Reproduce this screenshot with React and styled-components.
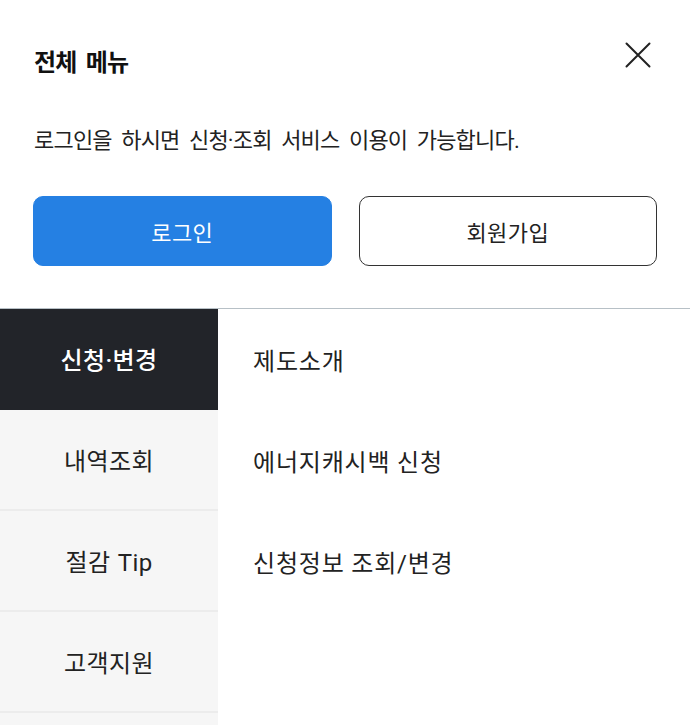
import styled, { createGlobalStyle } from "styled-components";

const GlobalStyle = createGlobalStyle`
  * {
    box-sizing: border-box;
  }
  body {
    margin: 0;
    background: #ffffff;
    font-family: "Roboto", "Noto Sans CJK KR", sans-serif;
    color: #222222;
  }
`;

const Panel = styled.div`
  width: 690px;
  height: 725px;
  overflow: hidden;
  background: #ffffff;
`;

const Header = styled.header`
  display: flex;
  align-items: flex-start;
  justify-content: space-between;
  padding: 42px 39px 0 34px;
  height: 84px;
`;

const Title = styled.h1`
  margin: 4px 0 0;
  font-size: 24px;
  line-height: 34px;
  font-weight: 700;
  color: #111111;
  letter-spacing: -0.8px;
  word-spacing: 4px;
`;

const CloseButton = styled.button`
  display: flex;
  padding: 0;
  border: none;
  background: none;
  cursor: pointer;
`;

const Notice = styled.p`
  margin: 42px 0 0 34px;
  font-size: 22px;
  line-height: 30px;
  color: #222222;
  letter-spacing: -0.8px;
  word-spacing: 4.8px;
`;

const ButtonRow = styled.div`
  display: grid;
  grid-template-columns: 1fr 1fr;
  gap: 27px;
  padding: 0 33px;
  margin-top: 40px;
`;

const AuthButton = styled.button`
  height: 70px;
  border-radius: 10px;
  font-family: inherit;
  font-size: 22px;
  letter-spacing: 0.4px;
  cursor: pointer;
  border: 1px solid ${(p) => (p.$primary ? "#2580e3" : "#333333")};
  background: ${(p) => (p.$primary ? "#2580e3" : "#ffffff")};
  color: ${(p) => (p.$primary ? "#ffffff" : "#222222")};
`;

const MenuArea = styled.div`
  display: flex;
  margin-top: 42px;
  border-top: 1px solid #b7c0c6;
`;

const Categories = styled.ul`
  list-style: none;
  margin: 0;
  padding: 0;
  width: 218px;
  background: #f6f6f6;
`;

const Category = styled.li`
  display: flex;
  align-items: center;
  justify-content: center;
  height: 101px;
  font-size: 24px;
  letter-spacing: 0.4px;
  word-spacing: 1px;
  font-weight: ${(p) => (p.$active ? 500 : 400)};
  background: ${(p) => (p.$active ? "#222429" : "#f6f6f6")};
  color: ${(p) => (p.$active ? "#ffffff" : "#222222")};
  border-bottom: 2px solid ${(p) => (p.$active ? "#222429" : "#ececec")};
`;

const Links = styled.ul`
  list-style: none;
  margin: 0;
  padding: 0 0 0 35px;
  flex: 1;
`;

const LinkItem = styled.li`
  display: flex;
  align-items: center;
  height: 101px;
  font-size: 24px;
  letter-spacing: 0.8px;
  word-spacing: 0;
  color: #222222;
`;

const categories = ["신청·변경", "내역조회", "절감 Tip", "고객지원", "기타"];
const links = ["제도소개", "에너지캐시백 신청", "신청정보 조회/변경"];

export default function App() {
  return (
    <>
      <GlobalStyle />
      <Panel>
        <Header>
          <Title>전체 메뉴</Title>
          <CloseButton type="button" aria-label="닫기">
            <svg width="26" height="26" viewBox="0 0 26 26" fill="none">
              <path
                d="M1.5 1.5L24.5 24.5M24.5 1.5L1.5 24.5"
                stroke="#222"
                strokeWidth="2"
                strokeLinecap="round"
              />
            </svg>
          </CloseButton>
        </Header>
        <Notice>로그인을 하시면 신청·조회 서비스 이용이 가능합니다.</Notice>
        <ButtonRow>
          <AuthButton type="button" $primary>
            로그인
          </AuthButton>
          <AuthButton type="button">회원가입</AuthButton>
        </ButtonRow>
        <MenuArea>
          <Categories>
            {categories.map((name, i) => (
              <Category key={name} $active={i === 0}>
                {name}
              </Category>
            ))}
          </Categories>
          <Links>
            {links.map((name) => (
              <LinkItem key={name}>{name}</LinkItem>
            ))}
          </Links>
        </MenuArea>
      </Panel>
    </>
  );
}
